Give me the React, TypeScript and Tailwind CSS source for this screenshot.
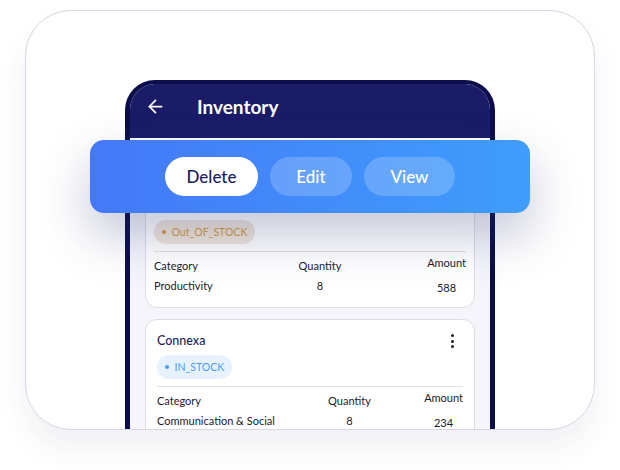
import { ArrowLeft } from "lucide-react";

const FONT = { fontFamily: "Lato, 'Noto Sans', sans-serif" };

type Item = {
  name: string;
  status: "IN_STOCK" | "Out_OF_STOCK";
  category: string;
  quantity: number;
  amount: number;
};

const items: Item[] = [
  { name: "Focusly", status: "Out_OF_STOCK", category: "Productivity", quantity: 8, amount: 588 },
  { name: "Connexa", status: "IN_STOCK", category: "Communication & Social", quantity: 8, amount: 234 },
];

function StatusBadge({ status }: { status: Item["status"] }) {
  const out = status === "Out_OF_STOCK";
  return (
    <span
      className={
        "inline-flex h-6 items-center gap-[6px] rounded-full pl-2 pr-2 text-[10.5px] leading-none " +
        (out ? "bg-[#f0e6da] text-[#d39a45]" : "bg-[#e7f2ff] text-[#4c9bf5]")
      }
    >
      <span className={"h-[3.5px] w-[3.5px] rounded-full " + (out ? "bg-[#d39a45]" : "bg-[#4c9bf5]")} />
      {status}
    </span>
  );
}

function ItemCard({ item, tight }: { item: Item; tight?: boolean }) {
  return (
    <div
      className={
        "rounded-xl border border-[#dcdce7] bg-white pb-[12px] pt-[13px] " + (tight ? "px-2" : "px-[11px]")
      }
    >
      <div className="flex h-4 items-center justify-between">
        <div className="text-[12.5px] font-medium leading-4 text-[#1d1f5c]">{item.name}</div>
        <div className="flex flex-col items-center gap-[2.5px] pr-[9px]">
          <span className="h-[3px] w-[3px] rounded-full bg-[#222]" />
          <span className="h-[3px] w-[3px] rounded-full bg-[#222]" />
          <span className="h-[3px] w-[3px] rounded-full bg-[#222]" />
        </div>
      </div>
      <div className="mt-1.5 flex">
        <StatusBadge status={item.status} />
      </div>
      <div className="mt-[7px] border-t border-[#e1e1e9]" />
      <div className="mt-[7px] flex justify-between text-[11px] leading-[14px] text-[#1b1b2a]">
        <div className="flex flex-col gap-[6px]">
          <span>Category</span>
          <span>{item.category}</span>
        </div>
        <div className="flex flex-col items-center gap-[6px]">
          <span>Quantity</span>
          <span>{item.quantity}</span>
        </div>
        <div className="-mt-[3px] flex flex-col items-center gap-[11px]">
          <span>Amount</span>
          <span>{item.amount}</span>
        </div>
      </div>
    </div>
  );
}

export default function App() {
  return (
    <div className="h-[470px] w-[620px] bg-white pl-[25px] pt-[10px]" style={FONT}>
      <div className="relative h-[420px] w-[570px] overflow-hidden rounded-[46px] border border-[#d8d6e6] bg-white shadow-[0_18px_30px_rgba(60,60,100,0.07)]">
        {/* phone */}
        <div className="ml-[99px] mt-[69px] w-[370px] overflow-hidden rounded-t-[30px] border-x-[5px] border-t-[4px] border-[#0b0e4b] bg-[#f5f5fb]">
          <div className="flex h-[54px] items-start gap-[31px] bg-[#1a1c68] pl-[15px] pt-[11px]">
            <ArrowLeft size={21} strokeWidth={2} className="mt-[1px] text-white" />
            <span className="text-[19px] font-bold leading-6 text-white">Inventory</span>
          </div>
          <div className="bg-white pt-[2px]" />
          <div className="flex flex-col gap-[11px] px-[15px] pt-[44px] pb-6">
            <ItemCard item={items[0]} tight />
            <ItemCard item={items[1]} />
          </div>
        </div>

        {/* action bar */}
        <div className="absolute left-[64px] top-[129px] flex h-[73px] w-[440px] items-center justify-center gap-3 rounded-[14px] bg-linear-to-r from-[#4478f8] to-[#3f9dfb] shadow-[0_22px_50px_rgba(40,50,110,0.28)]">
          <button className="h-[39px] w-[93px] rounded-full bg-white text-[17px] font-medium text-[#1a1c5c]">
            Delete
          </button>
          <button className="h-[39px] w-[82px] rounded-full bg-white/20 text-[17px] font-medium text-white">
            Edit
          </button>
          <button className="h-[39px] w-[91px] rounded-full bg-white/20 text-[17px] font-medium text-white">
            View
          </button>
        </div>
      </div>
    </div>
  );
}
